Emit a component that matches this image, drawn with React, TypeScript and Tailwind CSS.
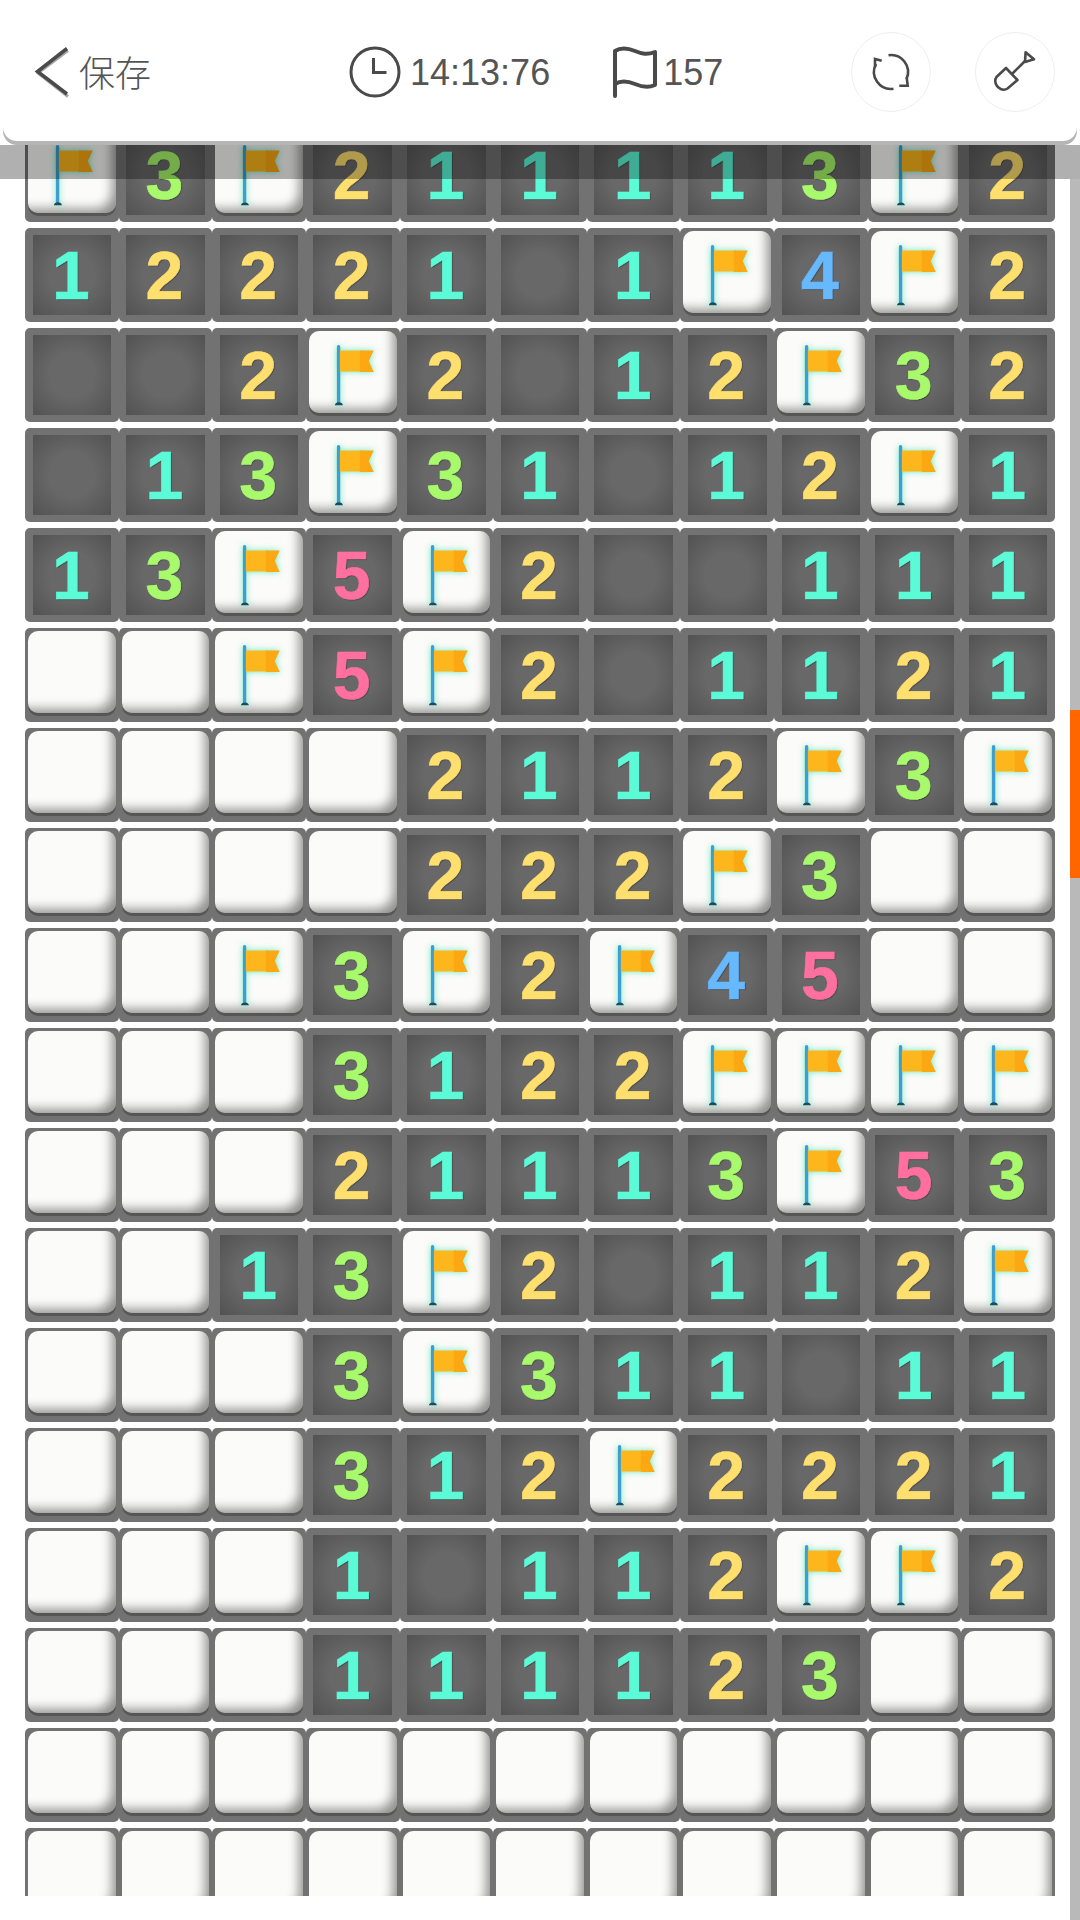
const rows = [
  "F3F211113F2",
  "12221_1F4F2",
  "__2F2_12F32",
  "_13F31_12F1",
  "13F5F2__111",
  "UUF5F2_1121",
  "UUUU2112F3F",
  "UUUU222F3UU",
  "UUF3F2F45UU",
  "UUU3122FFFF",
  "UUU21113F53",
  "UU13F2_112F",
  "UUU3F311_11",
  "UUU312F2221",
  "UUU1_112FF2",
  "UUU111123UU",
  "UUUUUUUUUUU",
  "UUUUUUUUUUU",
];

const digitClass: Record<string, string> = {
  "1": "text-[#5cfbd8]",
  "2": "text-[#ffdf6e]",
  "3": "text-[#a8fa6c]",
  "4": "text-[#66b8ff]",
  "5": "text-[#ff6f9f]",
};

function FlagMark() {
  return (
    <svg viewBox="0 0 88 82" className="h-full w-full drop-shadow-[0_0_3px_rgba(90,230,180,0.9)]">
      <rect x="28" y="14" width="3.400" height="59" rx="1.600" fill="#3f9ed0" />
      <path d="M26 74.500c0-2 2-3 4-3s4 1 4 3z" fill="#1d4a60" />
      <path d="M31 19.500h22v21H31z" fill="#fdb71c" />
      <path d="M51 19.500h14l-5 10.500 5 11H51z" fill="#fca812" />
    </svg>
  );
}

function Cell({ value }: { value: string }) {
  if (value === "U" || value === "F") {
    return (
      <div className="h-[94px] rounded-[5px] bg-[#727272] px-[3px] pt-[3px]">
        <div className="h-[82px] rounded-[10px] bg-[#fbfbf9] shadow-[inset_-11px_-11px_11px_-7px_rgba(0,0,0,0.42),0_3px_0_#565656]">
          {value === "F" && <FlagMark />}
        </div>
      </div>
    );
  }
  return (
    <div className="h-[94px] rounded-[5px] bg-[#727272] px-[7.500px] pt-[7px]">
      <div className="flex h-[80px] items-center justify-center bg-[radial-gradient(circle,#686868_40%,#525252_100%)] pr-[2px] font-['Liberation_Sans',sans-serif] text-[68px] leading-none font-bold">
        {value !== "_" && (
          <span className={`${digitClass[value]} [-webkit-text-stroke:0.6px_currentColor] [text-shadow:1px_1px_1px_rgba(0,0,0,0.3)]`}>
            {value}
          </span>
        )}
      </div>
    </div>
  );
}

export default function App() {
  return (
    <div className="relative h-[1920px] w-[1080px] overflow-hidden bg-white">
      <header className="relative z-20 mx-[3px] flex h-[141px] items-center rounded-b-[14px] bg-white pt-[3px] font-['Liberation_Sans',sans-serif] text-[36px] text-[#555] shadow-[0_4px_0_#b5b5b5]">
        <svg viewBox="0 0 36 52" className="ml-[31px] h-[52px] w-[36px]">
          <path d="M34 3 4 25.500 34 49" fill="none" stroke="#a8a8a8" strokeWidth="3" transform="translate(0 1.500)" />
          <path d="M33 2.500 3.500 25.500 33 48" fill="none" stroke="#4a4a4a" strokeWidth="3.500" />
        </svg>
        <span className="ml-[9px] -translate-y-[1px] font-['Noto_Sans_CJK_SC',sans-serif] text-[36px] font-light">保存</span>
        <svg viewBox="0 0 52 52" className="ml-[198px] h-[52px] w-[52px]">
          <circle cx="26" cy="26" r="24" fill="none" stroke="#4a4a4a" strokeWidth="3" />
          <path d="M24.500 12v14.500h13" fill="none" stroke="#4a4a4a" strokeWidth="3" />
        </svg>
        <span className="mt-[2px] ml-[9px]">14:13:76</span>
        <svg viewBox="0 0 46 52" className="ml-[61px] h-[52px] w-[46px]">
          <path
            d="M4 50V5c6-4 13-3 20 0s12 4 20 1v33c-7 3-13 2-20-1s-14-4-20 0"
            fill="none"
            stroke="#4a4a4a"
            strokeWidth="4"
            strokeLinecap="round"
            strokeLinejoin="round"
          />
        </svg>
        <span className="mt-[2px] ml-[6px]">157</span>
        <div className="ml-[128px] flex h-[80px] w-[80px] items-center justify-center rounded-full border border-[#eeeeee] bg-white">
          <svg viewBox="0 0 78 78" className="h-[78px] w-[78px]">
            <g fill="none" stroke="#4a4a4a" strokeWidth="2.600">
              <path d="M36.500 22.200A17 17 0 0 1 54.500 46" />
              <path d="M54.700 44.300l1 8.400h-8.400" />
              <path d="M41.500 55.800A17 17 0 0 1 24 31" />
              <path d="M29.700 27.700l-6.700-1.700v8" />
            </g>
          </svg>
        </div>
        <div className="ml-[44px] flex h-[80px] w-[80px] items-center justify-center rounded-full border border-[#eeeeee] bg-white">
          <svg viewBox="0 0 78 78" className="h-[78px] w-[78px]">
            <g fill="none" stroke="#4a4a4a" strokeWidth="2.600" strokeLinejoin="round">
              <path d="M30 35 20.500 44c-2 3-1.500 6 .5 9l1.500 1.500c3 2.500 6 3 9 1L41.500 47z" />
              <path d="M36 41 49 28" />
              <path d="M49.600 19.300 58 26.300 49 29z" />
            </g>
          </svg>
        </div>
      </header>

      <main className="-mt-[13px] ml-[25px] h-[1768px] w-[1030px] overflow-hidden">
        {rows.map((row, r) => (
          <div key={r} className="mb-[6px] grid grid-cols-11">
            {row.split("").map((value, c) => (
              <Cell key={c} value={value} />
            ))}
          </div>
        ))}
      </main>

      <div className="absolute top-[145px] left-0 z-10 h-[34px] w-[1080px] bg-[rgba(0,0,0,0.31)]" />
      <div className="absolute top-[179px] right-0 bottom-0 w-[10px] bg-[#b9b9b9]">
        <div className="mt-[531px] h-[168px] w-full bg-[#ff6600]" />
      </div>
    </div>
  );
}
